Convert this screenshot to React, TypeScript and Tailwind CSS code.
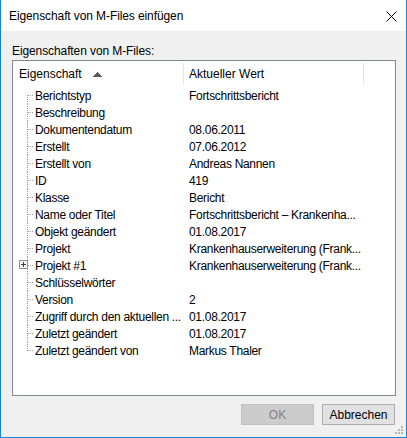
import React from "react";

const rows: [string, string][] = [
  ["Berichtstyp", "Fortschrittsbericht"],
  ["Beschreibung", ""],
  ["Dokumentendatum", "08.06.2011"],
  ["Erstellt", "07.06.2012"],
  ["Erstellt von", "Andreas Nannen"],
  ["ID", "419"],
  ["Klasse", "Bericht"],
  ["Name oder Titel", "Fortschrittsbericht – Krankenha..."],
  ["Objekt geändert", "01.08.2017"],
  ["Projekt", "Krankenhauserweiterung (Frank..."],
  ["Projekt #1", "Krankenhauserweiterung (Frank..."],
  ["Schlüsselwörter", ""],
  ["Version", "2"],
  ["Zugriff durch den aktuellen ...", "01.08.2017"],
  ["Zuletzt geändert", "01.08.2017"],
  ["Zuletzt geändert von", "Markus Thaler"],
];

function Tree({ first, last, plus }: { first: boolean; last: boolean; plus: boolean }) {
  const y1 = first ? 8 : 0;
  const y2 = last ? 9 : 17;
  return (
    <svg width="22" height="17" className="shrink-0" shapeRendering="crispEdges">
      <line x1="14.5" y1={y1} x2="14.5" y2={y2} stroke="#a0a0a0" strokeDasharray="1 1" />
      <line x1="15" y1="8.5" x2="21" y2="8.5" stroke="#a0a0a0" strokeDasharray="1 1" />
      {plus && (
        <g>
          <rect x="6.5" y="3.5" width="8" height="8" fill="#f4f4f4" stroke="#919191" />
          <line x1="8" y1="7.5" x2="13" y2="7.5" stroke="#404040" />
          <line x1="10.5" y1="5" x2="10.5" y2="10" stroke="#404040" />
        </g>
      )}
    </svg>
  );
}

export default function App() {
  return (
    <div
      className="w-[407px] h-[438px] bg-[#f0f0f0] border-l border-r border-b border-[#1883d7] flex flex-col text-[12px] text-black"
      style={{ fontFamily: '"Liberation Sans", Arial, sans-serif' }}
    >
      <div className="h-[31px] bg-white flex items-center pl-[8px] pr-[9px] pt-[1px] shrink-0">
        <span className="flex-1 leading-none tracking-[-0.1px]">Eigenschaft von M-Files einfügen</span>
        <svg width="11" height="11">
          <line x1="0.5" y1="0.5" x2="10.5" y2="10.5" stroke="#000" strokeWidth="1" />
          <line x1="10.5" y1="0.5" x2="0.5" y2="10.5" stroke="#000" strokeWidth="1" />
        </svg>
      </div>
      <div className="pl-[11px] pt-[12px] h-[16px] box-content leading-[16px] tracking-[-0.1px] shrink-0">
        Eigenschaften von M-Files:
      </div>
      <div className="ml-[11px] mt-[1px] w-[384px] h-[336px] border border-[#828790] bg-white flex flex-col shrink-0">
        <div className="h-[26px] flex items-stretch shrink-0">
          <div className="w-[170px] flex items-center pl-[6px] gap-[11px]">
            <span>Eigenschaft</span>
            <svg width="9" height="5" shapeRendering="crispEdges">
              <polygon points="4.5,0 9,5 0,5" fill="#5a5a5a" />
            </svg>
          </div>
          <div className="w-px bg-[#e5e5e5] my-[2px]" />
          <div className="w-[179px] flex items-center pl-[5px]">Aktueller Wert</div>
          <div className="w-px bg-[#e5e5e5] my-[2px]" />
        </div>
        <div className="flex flex-col tracking-[-0.3px]">
          {rows.map(([k, v], i) => (
            <div key={k} className="h-[17px] flex items-center">
              <Tree first={i === 0} last={i === rows.length - 1} plus={k === "Projekt #1"} />
              <div className="w-[149px] leading-[17px] whitespace-nowrap pt-[1px]">{k}</div>
              <div className="pl-[5px] leading-[17px] whitespace-nowrap pt-[1px]">{v}</div>
            </div>
          ))}
        </div>
      </div>
      <div className="flex justify-end gap-[8px] pr-[11px] mt-[8px] shrink-0">
        <div className="w-[73px] h-[21px] border border-[#bfbfbf] bg-[#cccccc] text-[#838383] flex items-center justify-center">
          OK
        </div>
        <div className="w-[73px] h-[21px] border border-[#adadad] bg-[#e1e1e1] flex items-center justify-center">
          Abbrechen
        </div>
      </div>
      <div className="flex-1 flex items-end justify-end pr-[2px] pb-[2px]">
        <svg width="9" height="9" shapeRendering="crispEdges">
          <rect x="6" y="0" width="2" height="2" fill="#b8b8b8" />
          <rect x="3" y="3" width="2" height="2" fill="#b8b8b8" />
          <rect x="6" y="3" width="2" height="2" fill="#b8b8b8" />
          <rect x="0" y="6" width="2" height="2" fill="#b8b8b8" />
          <rect x="3" y="6" width="2" height="2" fill="#b8b8b8" />
          <rect x="6" y="6" width="2" height="2" fill="#b8b8b8" />
        </svg>
      </div>
    </div>
  );
}
